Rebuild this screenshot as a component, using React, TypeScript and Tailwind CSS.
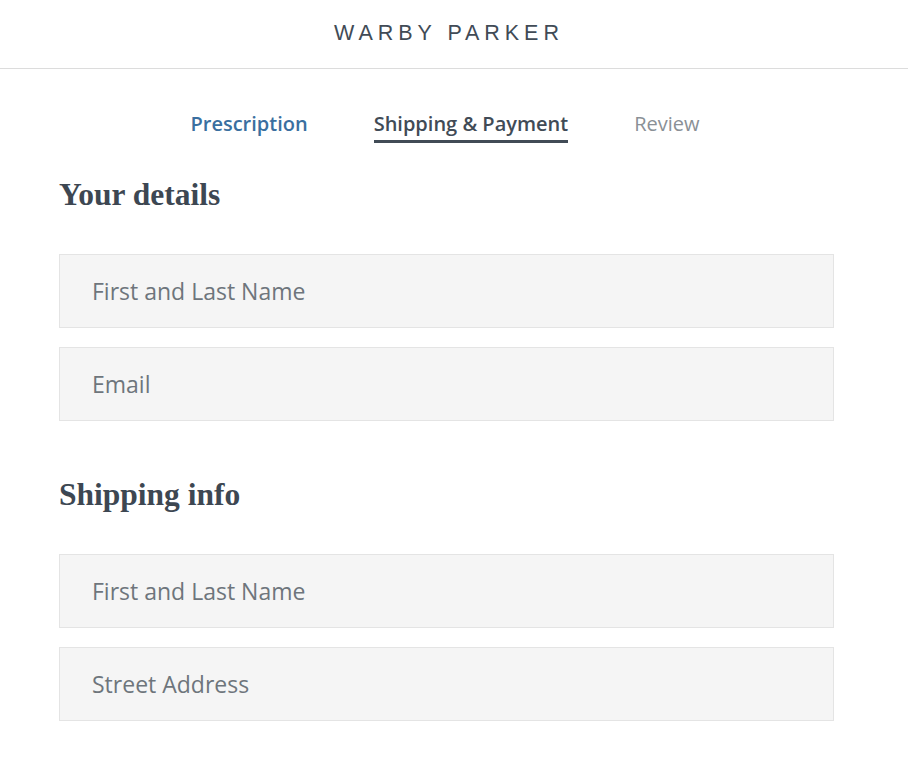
import React from "react";

const tabs = [
  { label: "Prescription", state: "done" },
  { label: "Shipping & Payment", state: "active" },
  { label: "Review", state: "todo" },
];

function Field({ placeholder }: { placeholder: string }) {
  return (
    <div className="h-[74px] flex items-center px-[32px] bg-[#f5f5f5] border border-[#e4e4e4]">
      <span className="text-[23px] text-[#6e757c] leading-none font-['Open_Sans',sans-serif]">{placeholder}</span>
    </div>
  );
}

function Section({ title, fields, className }: { title: string; fields: string[]; className?: string }) {
  return (
    <section className={className}>
      <h2 className="text-[31.5px] leading-[34px] font-bold text-[#3d4752] font-['Liberation_Serif',serif]">{title}</h2>
      <div className="mt-[42px] flex flex-col gap-[19px]">
        {fields.map((f, i) => (
          <Field key={i} placeholder={f} />
        ))}
      </div>
    </section>
  );
}

export default function App() {
  return (
    <div className="w-[908px] h-[758px] bg-white font-['Open_Sans','Liberation_Sans',sans-serif] overflow-hidden">
      <header className="h-[69px] flex items-center justify-center border-b border-[#dcdcdc]">
        <span className="text-[21.5px] tracking-[0.23em] text-[#414b56] font-['Liberation_Sans',sans-serif] pb-[1px] mr-[10px]">
          WARBY PARKER
        </span>
      </header>

      <nav className="pt-[43px] pr-[18px] flex justify-center gap-[66px]">
        {tabs.map((t) => (
          <div
            key={t.label}
            className={
              t.state === "active"
                ? "pb-[3px] border-b-[3px] border-[#414b56] text-[#414b56] font-semibold"
                : t.state === "done"
                ? "pb-[3px] border-b-[3px] border-transparent text-[#3a6fa0] font-semibold"
                : "pb-[3px] border-b-[3px] border-transparent text-[#8a9096]"
            }
          >
            <span className="text-[20px] leading-[24px]">{t.label}</span>
          </div>
        ))}
      </nav>

      <div className="pl-[59px]">
        <div className="w-[775px]">
          <Section className="mt-[35px]" title="Your details" fields={["First and Last Name", "Email"]} />
          <Section className="mt-[57px]" title="Shipping info" fields={["First and Last Name", "Street Address"]} />
        </div>
      </div>
    </div>
  );
}
